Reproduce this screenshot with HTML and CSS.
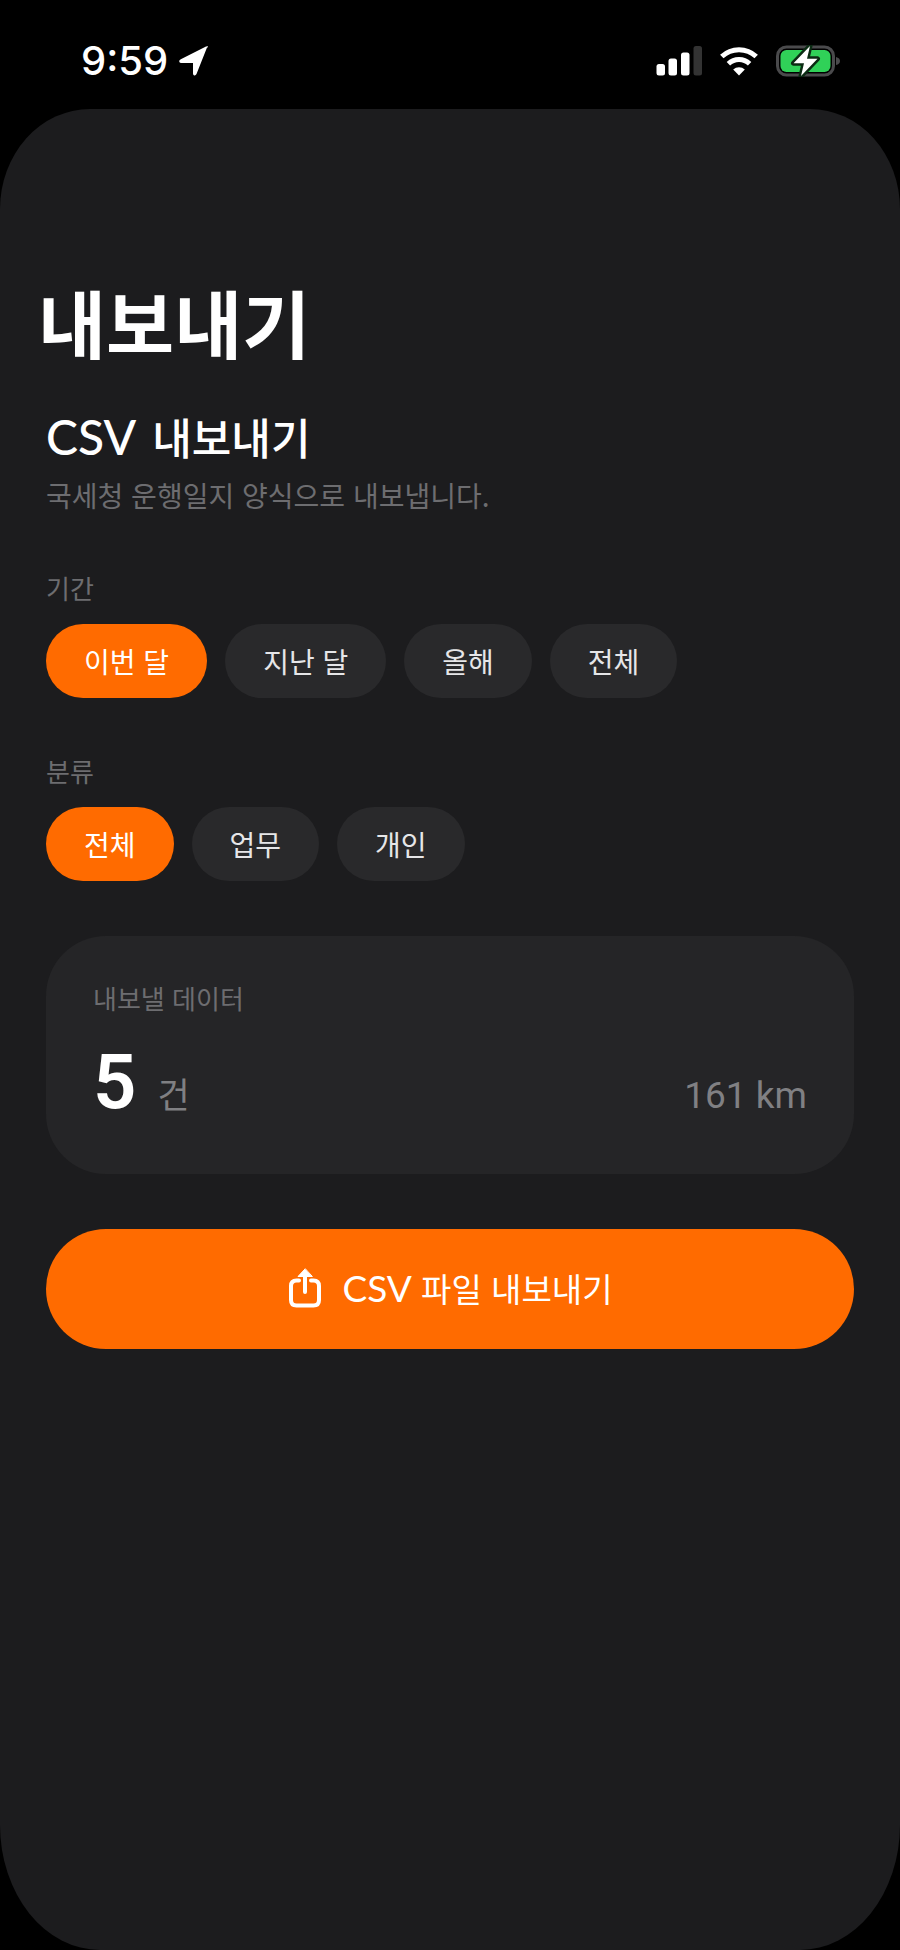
FILE: index.html
```html
<!DOCTYPE html>
<html lang="ko">
<head>
<meta charset="utf-8">
<meta name="viewport" content="width=device-width, initial-scale=1">
<title>내보내기</title>
<link rel="stylesheet" href="styles.css">
</head>
<body>
<header class="status">
  <div class="status-group">
    <span class="clock">9:59</span>
    <svg class="location" viewBox="0 0 32 32" aria-hidden="true"><path d="M29 2.500 18.500 29Q17.500 31 15.800 30.200 15 29.700 15 28.500V18H3.500Q1.500 18 1.200 16.500 1 15 2.800 14.200L28 1.600Q30.400.700 30 2.200Z"/></svg>
  </div>
  <div class="status-group status-icons">
    <svg class="signal" viewBox="0 0 46 30" aria-hidden="true"><rect x="0.500" y="18" width="8.500" height="11.500" rx="2.500"/><rect x="12.500" y="12.500" width="8.500" height="17" rx="2.500"/><rect x="25" y="6.500" width="8.500" height="23" rx="2.500"/><rect class="dim" x="37.500" y="0" width="8.500" height="29.500" rx="2.500"/></svg>
    <svg class="wifi" viewBox="0 0 40 30" aria-hidden="true"><path class="arc" d="M2.800 10.500a25 25 0 0 1 34.400 0M9.400 17.800a15.500 15.500 0 0 1 21.200 0"/><path d="M20 29.500 14.200 23.600a8.400 8.400 0 0 1 11.600 0Z"/></svg>
    <svg class="battery" viewBox="0 0 64 32" aria-hidden="true"><rect class="shell" x="1.500" y="2" width="56" height="28" rx="9"/><path class="cap" d="M60 12q4 1 4 4t-4 4Z"/><rect class="charge" x="4.500" y="5" width="50" height="22" rx="6"/><path class="bolt" d="M34 1 17.500 18.200H28L25 31 41.500 13.800H31Z"/></svg>
  </div>
</header>
<main class="sheet">
  <h1 class="title">내보내기</h1>
  <div class="content">
    <div class="intro">
      <h2 class="subtitle"><span class="subtitle-latin">CSV</span> 내보내기</h2>
      <p class="description">국세청 운행일지 양식으로 내보냅니다.</p>
    </div>
    <section class="filter" aria-labelledby="period">
      <h3 class="label" id="period">기간</h3>
      <div class="chips">
        <button class="chip selected" type="button" aria-pressed="true">이번 달</button>
        <button class="chip" type="button" aria-pressed="false">지난 달</button>
        <button class="chip" type="button" aria-pressed="false">올해</button>
        <button class="chip" type="button" aria-pressed="false">전체</button>
      </div>
    </section>
    <section class="filter" aria-labelledby="category">
      <h3 class="label" id="category">분류</h3>
      <div class="chips">
        <button class="chip selected" type="button" aria-pressed="true">전체</button>
        <button class="chip" type="button" aria-pressed="false">업무</button>
        <button class="chip" type="button" aria-pressed="false">개인</button>
      </div>
    </section>
    <section class="card" aria-labelledby="data">
      <h3 class="label" id="data">내보낼 데이터</h3>
      <div class="summary">
        <div class="count"><span class="number">5</span><span class="unit">건</span></div>
        <span class="distance">161 km</span>
      </div>
    </section>
    <button class="export" type="button">
      <svg class="share" viewBox="0 0 34 42" aria-hidden="true"><path d="M11 13.500H8.500Q3 13.500 3 19V33Q3 38.500 8.500 38.500H25.500Q31 38.500 31 33V19Q31 13.500 25.500 13.500H23M17 25V5"/><path class="tip" d="M17 2 10 9.500H24Z"/></svg>
      <span><span class="export-latin">CSV</span> 파일 내보내기</span>
    </button>
  </div>
</main>
</body>
</html>
```
FILE: styles.css
```css
* {
  box-sizing: border-box;
}

body {
  margin: 0;
  min-height: 100vh;
  display: flex;
  flex-direction: column;
  background: #000;
  color: #fff;
  font-family: "Noto Sans CJK KR", sans-serif;
}

h1, h2, h3, p {
  margin: 0;
}

button {
  border: 0;
  font-family: inherit;
  cursor: pointer;
}

.status {
  display: flex;
  justify-content: space-between;
  align-items: center;
  padding: 37px 60px 24px 81px;
}

.status-group {
  display: flex;
  align-items: center;
  gap: 10px;
}

.status-icons {
  gap: 17px;
}

.clock {
  font-family: Inter, sans-serif;
  font-size: 40px;
  font-weight: 500;
  line-height: 48px;
}

.location {
  width: 32px;
  height: 32px;
  fill: #fff;
}

.signal {
  width: 46px;
  height: 30px;
  fill: #fff;
}

.signal .dim {
  fill: #333;
}

.wifi {
  width: 40px;
  height: 30px;
  fill: #fff;
}

.wifi .arc {
  fill: none;
  stroke: #fff;
  stroke-width: 5;
}

.battery {
  width: 64px;
  height: 32px;
}

.battery .shell {
  fill: none;
  stroke: #4a4a4c;
  stroke-width: 3;
}

.battery .cap {
  fill: #4a4a4c;
}

.battery .charge {
  fill: #30d158;
}

.battery .bolt {
  fill: #fff;
  stroke: #0b2b13;
  stroke-width: 5;
  stroke-linejoin: round;
  paint-order: stroke;
}

.sheet {
  flex: 1;
  padding: 168px 46px 60px;
  background: #1c1c1e;
  border-radius: 90px 90px 100px 100px / 100px 100px 125px 125px;
}

.title {
  margin-left: -8px;
  font-size: 74px;
  font-weight: 700;
  line-height: 88px;
}

.content {
  display: flex;
  flex-direction: column;
  gap: 55px;
  margin-top: 45px;
}

.subtitle {
  font-size: 43px;
  font-weight: 500;
  line-height: 52px;
}

.subtitle-latin {
  margin-right: 4px;
  font-family: Lato, sans-serif;
  font-size: 48px;
}

.description {
  margin-top: 12px;
  color: #6d6d70;
  font-size: 28px;
  line-height: 40px;
}

.label {
  color: #6d6d70;
  font-size: 26px;
  font-weight: 400;
  line-height: 36px;
}

.chips {
  display: flex;
  flex-wrap: wrap;
  gap: 18px;
  margin-top: 18px;
}

.chip {
  padding: 16px 38px;
  border-radius: 37px;
  background: #29292b;
  color: #e6e6e8;
  font-size: 28px;
  line-height: 42px;
}

.chip.selected {
  background: #ff6b00;
  color: #fff;
}

.card {
  padding: 44px 47px;
  border-radius: 60px;
  background: #252527;
}

.summary {
  display: flex;
  justify-content: space-between;
  align-items: baseline;
  margin-top: 18px;
}

.count {
  display: flex;
  align-items: baseline;
  gap: 21px;
}

.number {
  font-family: Roboto, sans-serif;
  font-size: 76px;
  font-weight: 600;
  line-height: 96px;
}

.unit {
  color: #808083;
  font-size: 35px;
}

.distance {
  color: #808083;
  font-family: Roboto, sans-serif;
  font-size: 37px;
}

.export {
  display: flex;
  justify-content: center;
  align-items: center;
  gap: 21px;
  padding: 35px 36px 37px;
  border-radius: 60px;
  background: #ff6b00;
  color: #fff;
  font-size: 33px;
  line-height: 48px;
}

.export-latin {
  font-family: Lato, sans-serif;
  font-size: 37px;
}

.share {
  width: 34px;
  height: 42px;
  fill: none;
  stroke: #fff;
  stroke-width: 4;
  stroke-linecap: round;
  stroke-linejoin: round;
}

.share .tip {
  fill: #fff;
  stroke-width: 1;
}
```
